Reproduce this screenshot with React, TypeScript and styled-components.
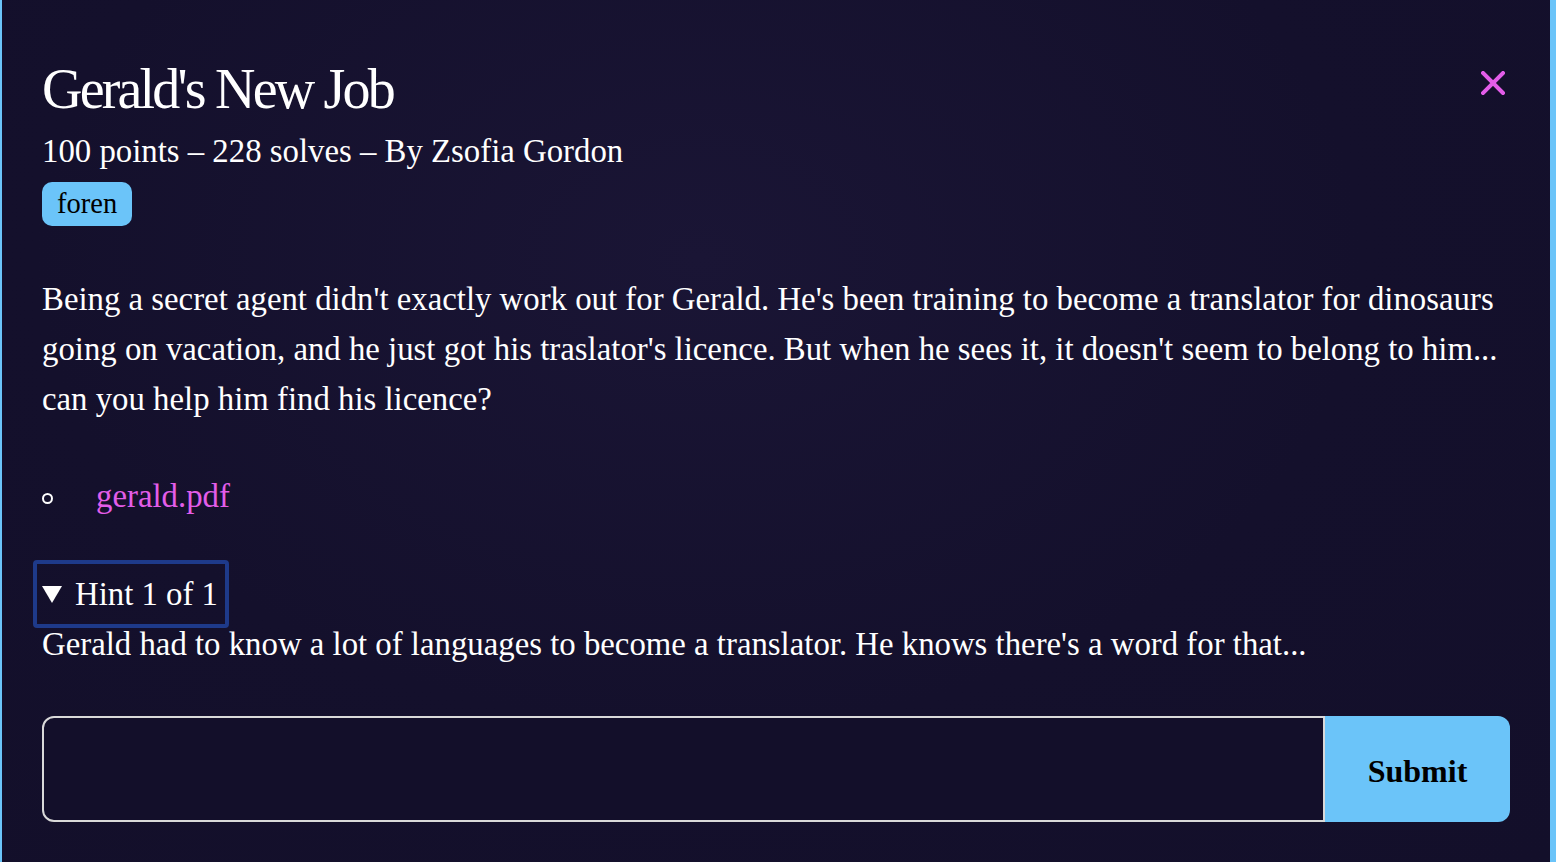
import React from "react";
import styled, { createGlobalStyle } from "styled-components";

const Global = createGlobalStyle`
  html, body { margin: 0; padding: 0; background: #14102c; }
  body { font-family: "Liberation Serif", "Times New Roman", serif; color: #ffffff; }
  * { box-sizing: border-box; }
`;

const Page = styled.div`
  min-height: 862px;
  border-left: 2px solid #6bc4f9;
  border-right: 6px solid #6bc4f9;
  background: radial-gradient(ellipse at 45% 30%, #1a1535 0%, #14102c 55%, #130f2a 100%);
  padding: 57px 40px 0 40px;
  display: flex;
  flex-direction: column;
`;

const Header = styled.div`
  display: flex;
  justify-content: space-between;
  align-items: flex-start;
`;

const Title = styled.h1`
  margin: 0;
  font-size: 56px;
  line-height: 64px;
  font-weight: 400;
  letter-spacing: -2.8px;
`;

const CloseButton = styled.button`
  background: none;
  border: none;
  padding: 0;
  margin: 14px 5px 0 0;
  width: 24px;
  height: 24px;
  cursor: pointer;
  display: flex;
`;

const Meta = styled.div`
  margin-top: 10px;
  font-size: 32.8px;
  line-height: 40px;
`;

const Tag = styled.span`
  align-self: flex-start;
  margin-top: 11px;
  background: #6bc4f9;
  color: #000;
  font-size: 28.5px;
  line-height: 32px;
  padding: 6px 15px;
  border-radius: 10px;
`;

const Description = styled.p`
  margin: 48px 0 0 0;
  font-size: 32.8px;
  line-height: 50px;
`;

const FileList = styled.ul`
  list-style: none;
  margin: 47px 0 0 0;
  padding: 0;
`;

const FileItem = styled.li`
  display: flex;
  align-items: center;
  font-size: 32.8px;
  line-height: 50px;
`;

const Bullet = styled.span`
  width: 11px;
  height: 11px;
  border: 2px solid #fff;
  border-radius: 50%;
  margin: 4px 43px 0 0;
`;

const FileLink = styled.a`
  color: #e35de9;
  text-decoration: none;
`;

const Hint = styled.details`
  margin-top: 39px;
  margin-left: -9px;
`;

const HintSummary = styled.summary`
  display: inline-flex;
  align-items: center;
  list-style: none;
  border: 4px solid #1e3a8a;
  border-radius: 4px;
  padding: 1px 7px 0 5px;
  height: 68px;
  font-size: 32.8px;
  cursor: pointer;
  &::-webkit-details-marker { display: none; }
`;

const Triangle = styled.svg`
  margin-right: 13px;
`;

const HintText = styled.div`
  margin-left: 9px;
  margin-top: 0;
  font-size: 32.8px;
  line-height: 32px;
`;

const FlagForm = styled.form`
  display: flex;
  margin-top: 56px;
  height: 106px;
`;

const FlagInput = styled.input`
  flex: 1;
  height: 106px;
  background: #130f2a;
  border: 2px solid #d9d9d9;
  border-radius: 12px 0 0 12px;
  color: #fff;
  font-family: inherit;
  font-size: 32px;
  padding: 0 20px;
  outline: none;
`;

const SubmitButton = styled.button`
  width: 185px;
  height: 106px;
  padding: 4px 0 0 0;
  background: #6bc4f9;
  border: none;
  border-radius: 0 12px 12px 0;
  font-family: "Liberation Serif", "Times New Roman", serif;
  font-weight: 700;
  font-size: 32px;
  color: #000;
  cursor: pointer;
`;

export default function App() {
  return (
    <>
      <Global />
      <Page>
        <Header>
          <Title>Gerald's New Job</Title>
          <CloseButton aria-label="Close">
            <svg width="24" height="24" viewBox="0 0 24 24">
              <path d="M2 2 L22 22 M22 2 L2 22" stroke="#e35de9" strokeWidth="4" strokeLinecap="square" />
            </svg>
          </CloseButton>
        </Header>
        <Meta>100 points – 228 solves – By Zsofia Gordon</Meta>
        <Tag>foren</Tag>
        <Description>
          Being a secret agent didn't exactly work out for Gerald. He's been training to become a translator for dinosaurs going on vacation, and he just got his traslator's licence. But when he sees it, it doesn't seem to belong to him... can you help him find his licence?
        </Description>
        <FileList>
          <FileItem>
            <Bullet />
            <FileLink href="#">gerald.pdf</FileLink>
          </FileItem>
        </FileList>
        <Hint open>
          <HintSummary>
            <Triangle width="20" height="17" viewBox="0 0 20 17">
              <path d="M0 0 H20 L10 17 Z" fill="#fff" />
            </Triangle>
            Hint 1 of 1
          </HintSummary>
          <HintText>Gerald had to know a lot of languages to become a translator. He knows there's a word for that...</HintText>
        </Hint>
        <FlagForm onSubmit={(e) => e.preventDefault()}>
          <FlagInput type="text" aria-label="Flag" />
          <SubmitButton type="submit">Submit</SubmitButton>
        </FlagForm>
      </Page>
    </>
  );
}
